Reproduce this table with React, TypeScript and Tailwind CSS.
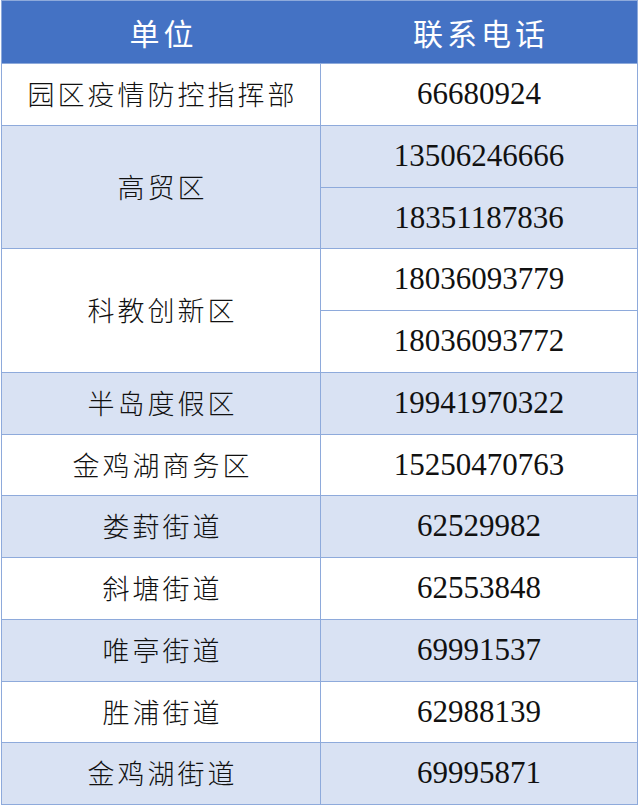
import React from "react";

type Row = { unit: string; phones: string[]; shaded: boolean };

const rows: Row[] = [
  { unit: "园区疫情防控指挥部", phones: ["66680924"], shaded: false },
  { unit: "高贸区", phones: ["13506246666", "18351187836"], shaded: true },
  { unit: "科教创新区", phones: ["18036093779", "18036093772"], shaded: false },
  { unit: "半岛度假区", phones: ["19941970322"], shaded: true },
  { unit: "金鸡湖商务区", phones: ["15250470763"], shaded: false },
  { unit: "娄葑街道", phones: ["62529982"], shaded: true },
  { unit: "斜塘街道", phones: ["62553848"], shaded: false },
  { unit: "唯亭街道", phones: ["69991537"], shaded: true },
  { unit: "胜浦街道", phones: ["62988139"], shaded: false },
  { unit: "金鸡湖街道", phones: ["69995871"], shaded: true },
];

const cjk = { fontFamily: '"Noto Sans CJK SC", sans-serif' };
const num = { fontFamily: '"Liberation Serif", "Times New Roman", serif' };

export default function App() {
  return (
    <div className="w-[640px] h-[807px] bg-white pl-[1px]">
      <div className="w-[637px] h-[805px] bg-[#8eaadb] p-[1px] grid grid-cols-[318px_1fr] grid-rows-[62px_repeat(12,minmax(0,1fr))] gap-[1px]">
        {/* header */}
        <div className="col-span-2 bg-[#4472c4] grid grid-cols-[319px_1fr] text-white text-[30px] font-normal tracking-[4px]" style={cjk}>
          <div className="flex items-center justify-center pl-[4px]">单位</div>
          <div className="flex items-center justify-center pl-[4px]">联系电话</div>
        </div>

        {rows.map((r) => {
          const bg = r.shaded ? "bg-[#d9e2f3]" : "bg-white";
          return (
            <React.Fragment key={r.unit}>
              <div
                className={`${bg} ${r.phones.length === 2 ? "row-span-2" : ""} flex items-center justify-center text-[27px] font-light text-[#111] tracking-[3px] pl-[3px]`}
                style={cjk}
              >
                {r.unit}
              </div>
              {r.phones.map((p) => (
                <div key={p} className={`${bg} flex items-center justify-center text-[31px] text-[#111]`} style={num}>
                  {p}
                </div>
              ))}
            </React.Fragment>
          );
        })}
      </div>
    </div>
  );
}
